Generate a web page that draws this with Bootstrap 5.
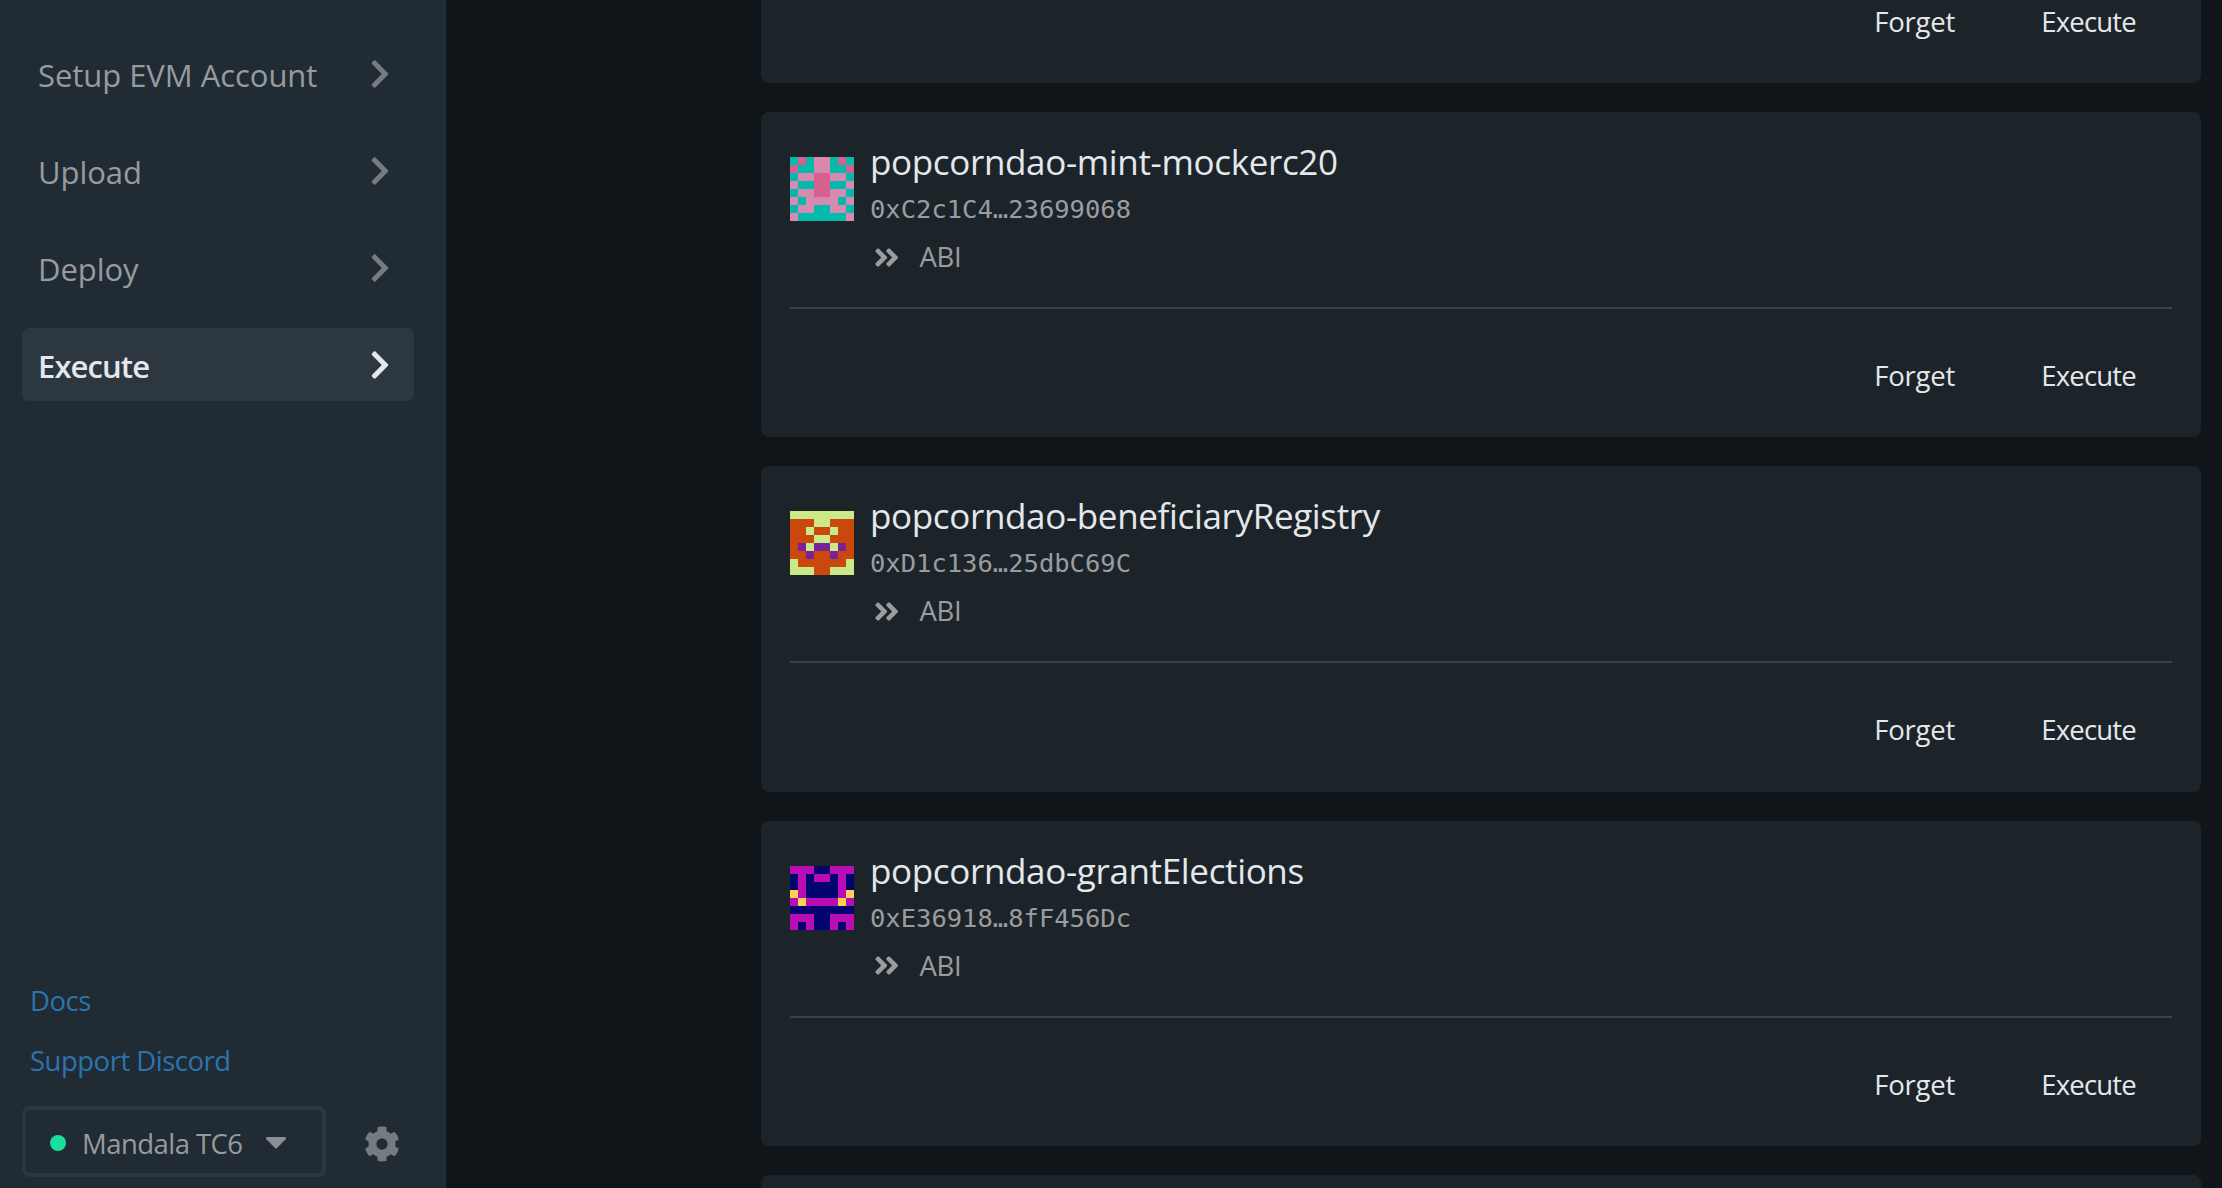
<!DOCTYPE html>
<html lang="en">
<head>
    <meta charset="UTF-8">
    <meta name="viewport" content="width=device-width, initial-scale=1.0">
    <title>Canvas UI - Execute</title>
    <link href="https://cdn.jsdelivr.net/npm/bootstrap@5.3.0/dist/css/bootstrap.min.css" rel="stylesheet">
    <style>
        body {
            background: #101519;
            color: #e3e8ec;
            font-family: "Open Sans", "Noto Sans", sans-serif;
            font-size: 27.5px;
            line-height: 40px;
        }

        /* sidebar */
        .sidebar {
            width: 446px;
            background: #212b33;
            padding: 37px 32px 11px 22px;
        }
        .menu {
            gap: 24px;
        }
        .menu-item {
            height: 73px;
            padding: 0 24.5px 0 16px;
            border-radius: 7px;
            color: #979b9f;
            font-size: 31px;
            text-decoration: none;
        }
        .menu-item span {
            padding-top: 2px;
            letter-spacing: -.05px;
        }
        .menu-item svg {
            width: 20px;
            height: 32px;
            fill: #767b82;
        }
        .menu-item.active {
            background: #2c373f;
            color: #e3e8ee;
            font-weight: 600;
        }
        .menu-item.active span {
            letter-spacing: -.9px;
        }
        .menu-item.active svg {
            fill: #e3e8ee;
        }
        .help-links {
            gap: 20px;
            padding-left: 8px;
            margin-bottom: 25px;
        }
        .help-links a {
            color: #2c74ad;
            text-decoration: none;
            letter-spacing: -.5px;
        }
        .network {
            width: 304px;
            height: 71px;
            padding: 3px 0 0 24px;
            border: 4px solid #2c363f;
            border-radius: 8px;
            color: #979b9f;
            letter-spacing: -.55px;
        }
        .network-name {
            padding-top: 2px;
        }
        .status-dot {
            width: 16px;
            height: 16px;
            margin-right: 16px;
            background: #18e09c;
        }
        .caret {
            width: 20px;
            height: 12px;
            margin-left: 23px;
            fill: #8b8f93;
        }
        .cog {
            width: 36px;
            height: 36px;
            margin: 5px 0 0 38px;
            fill: #767b82;
        }

        /* contract list */
        .contracts {
            padding: 0 21px 0 315px;
            gap: 29px;
        }
        .contract {
            height: 325.4px;
            padding: 26px 29px 0;
            border-radius: 8px;
            background: #1d2429;
        }
        .contract-cut {
            height: 83px;
            padding-top: 0;
            border-radius: 0 0 8px 8px;
        }
        .identicon {
            width: 64px;
            height: 64px;
            margin: 19px 16px 0 0;
        }
        .contract h2 {
            margin: 0 0 3px;
            font-size: 35px;
            font-weight: 400;
            line-height: 48px;
            letter-spacing: -.35px;
        }
        .address {
            color: #9a9d9f;
            font-family: "DejaVu Sans Mono", monospace;
            font-size: 25.5px;
        }
        .abi {
            height: 40px;
            margin-top: 8px;
            padding-left: 4px;
            color: #9a9d9f;
            letter-spacing: -.3px;
        }
        .abi svg {
            width: 25.4px;
            height: 29px;
            margin-right: 20px;
            fill: #9a9d9f;
        }
        .rule {
            height: 2px;
            margin-top: 30px;
            background: #38424a;
        }
        .actions {
            gap: 86px;
            padding: 47px 36px 0 0;
        }
        .contract-cut .actions {
            padding-top: 2px;
        }
        .actions button {
            padding: 0;
            border: 0;
            background: none;
            color: inherit;
            letter-spacing: -.2px;
        }
        .actions button:last-child {
            letter-spacing: -.8px;
        }
    </style>
</head>
<body class="vh-100 overflow-hidden">
    <svg class="d-none">
        <symbol id="chevron" viewBox="0 0 320 512">
            <path d="M285.476 272.971L91.132 467.314c-9.373 9.373-24.569 9.373-33.941 0l-22.667-22.667c-9.357-9.357-9.375-24.522-.04-33.901L188.505 256 34.484 101.255c-9.335-9.379-9.317-24.544.04-33.901l22.667-22.667c9.373-9.373 24.569-9.373 33.941 0L285.475 239.03c9.373 9.372 9.373 24.568.001 33.941z"/>
        </symbol>
        <symbol id="double-right" viewBox="0 0 448 512">
            <path d="M224.3 273l-136 136c-9.4 9.4-24.6 9.4-33.9 0l-22.6-22.6c-9.4-9.4-9.4-24.6 0-33.9l96.4-96.4-96.4-96.4c-9.4-9.4-9.4-24.6 0-33.9L54.3 103c9.4-9.4 24.6-9.4 33.9 0l136 136c9.5 9.4 9.5 24.6.1 34zm192-34l-136-136c-9.4-9.4-24.6-9.4-33.9 0l-22.6 22.6c-9.4 9.4-9.4 24.6 0 33.9l96.4 96.4-96.4 96.4c-9.4 9.4-9.4 24.6 0 33.9l22.6 22.6c9.4 9.4 24.6 9.4 33.9 0l136-136c9.4-9.2 9.4-24.4 0-33.8z"/>
        </symbol>
    </svg>

    <div class="d-flex h-100">
        <aside class="sidebar d-flex flex-column flex-shrink-0">
            <nav class="menu d-flex flex-column">
                <a href="#" class="menu-item d-flex align-items-center justify-content-between"><span>Setup EVM Account</span><svg><use href="#chevron"/></svg></a>
                <a href="#" class="menu-item d-flex align-items-center justify-content-between"><span>Upload</span><svg><use href="#chevron"/></svg></a>
                <a href="#" class="menu-item d-flex align-items-center justify-content-between"><span>Deploy</span><svg><use href="#chevron"/></svg></a>
                <a href="#" class="menu-item active d-flex align-items-center justify-content-between"><span>Execute</span><svg><use href="#chevron"/></svg></a>
            </nav>
            <div class="help-links d-flex flex-column mt-auto">
                <a href="#">Docs</a>
                <a href="#">Support Discord</a>
            </div>
            <div class="d-flex align-items-center">
                <div class="network d-flex align-items-center">
                    <span class="status-dot rounded-circle"></span>
                    <span class="network-name">Mandala TC6</span>
                    <svg class="caret" viewBox="0 0 20 12"><path d="M1.4 0h17.2c1.2 0 1.8 1.4 1 2.3l-8.5 8.7c-.6.6-1.6.6-2.2 0L.4 2.3C-.4 1.4.2 0 1.4 0z"/></svg>
                </div>
                <svg class="cog" viewBox="0 0 512 512"><path d="M487.4 315.7l-42.6-24.6c4.3-23.2 4.3-47 0-70.2l42.6-24.6c4.9-2.8 7.1-8.6 5.5-14-11.1-35.6-30-67.8-54.7-94.6-3.8-4.1-10-5.1-14.8-2.3L380.8 110c-17.9-15.4-38.5-27.3-60.8-35.1V25.8c0-5.6-3.9-10.5-9.4-11.7-36.7-8.2-74.3-7.8-109.2 0-5.5 1.2-9.4 6.1-9.4 11.7V75c-22.2 7.9-42.8 19.8-60.8 35.1L88.7 85.5c-4.9-2.8-11-1.9-14.8 2.3-24.7 26.7-43.6 58.9-54.7 94.6-1.7 5.4.6 11.2 5.5 14L67.3 221c-4.3 23.2-4.3 47 0 70.2l-42.6 24.6c-4.9 2.8-7.1 8.6-5.5 14 11.1 35.6 30 67.8 54.7 94.6 3.8 4.1 10 5.1 14.8 2.3l42.6-24.6c17.9 15.4 38.5 27.3 60.8 35.1v49.2c0 5.6 3.9 10.5 9.4 11.7 36.7 8.2 74.3 7.8 109.2 0 5.5-1.2 9.4-6.1 9.4-11.7v-49.2c22.2-7.9 42.8-19.8 60.8-35.1l42.6 24.6c4.9 2.8 11 1.9 14.8-2.3 24.7-26.7 43.6-58.9 54.7-94.6 1.5-5.5-.7-11.3-5.6-14.1zM256 336c-44.1 0-80-35.9-80-80s35.9-80 80-80 80 35.9 80 80-35.9 80-80 80z"/></svg>
            </div>
        </aside>

        <main class="contracts d-flex flex-column flex-grow-1 overflow-hidden">
            <section class="contract contract-cut flex-shrink-0">
                <div class="actions d-flex justify-content-end"><button type="button">Forget</button><button type="button">Execute</button></div>
            </section>

            <section class="contract flex-shrink-0">
                <div class="d-flex align-items-start">
                    <svg class="identicon" data-colors="#03bbac,#d889af,#d4618f" data-cells="02011020 20011002 01122110 10022001 01122110 10111101 01100110 10000001"></svg>
                    <div>
                        <h2>popcorndao-mint-mockerc20</h2>
                        <div class="address">0xC2c1C4…23699068</div>
                        <div class="abi d-flex align-items-center"><svg><use href="#double-right"/></svg>ABI</div>
                    </div>
                </div>
                <div class="rule"></div>
                <div class="actions d-flex justify-content-end"><button type="button">Forget</button><button type="button">Execute</button></div>
            </section>

            <section class="contract flex-shrink-0">
                <div class="d-flex align-items-start">
                    <svg class="identicon" data-colors="#ca480b,#caea8a,#7a2298" data-cells="11111111 00011000 00100100 00011000 02122120 00200200 10000001 11100111"></svg>
                    <div>
                        <h2>popcorndao-beneficiaryRegistry</h2>
                        <div class="address">0xD1c136…25dbC69C</div>
                        <div class="abi d-flex align-items-center"><svg><use href="#double-right"/></svg>ABI</div>
                    </div>
                </div>
                <div class="rule"></div>
                <div class="actions d-flex justify-content-end"><button type="button">Forget</button><button type="button">Execute</button></div>
            </section>

            <section class="contract flex-shrink-0">
                <div class="d-flex align-items-start">
                    <svg class="identicon" data-colors="#03036f,#b90cb5,#fdd252" data-cells="11100111 01011010 01000010 21000012 12111121 00000000 11100111 10100101"></svg>
                    <div>
                        <h2>popcorndao-grantElections</h2>
                        <div class="address">0xE36918…8fF456Dc</div>
                        <div class="abi d-flex align-items-center"><svg><use href="#double-right"/></svg>ABI</div>
                    </div>
                </div>
                <div class="rule"></div>
                <div class="actions d-flex justify-content-end"><button type="button">Forget</button><button type="button">Execute</button></div>
            </section>

            <section class="contract flex-shrink-0"></section>
        </main>
    </div>

    <script src="https://cdn.jsdelivr.net/npm/bootstrap@5.3.0/dist/js/bootstrap.bundle.min.js"></script>
    <script>
        // paint the 8x8 address identicons
        document.querySelectorAll('.identicon').forEach(function(icon) {
            const colors = icon.dataset.colors.split(',');
            let rects = '';
            icon.dataset.cells.split(' ').forEach(function(row, y) {
                row.split('').forEach(function(cell, x) {
                    rects += `<rect x="${x}" y="${y}" width="1" height="1" fill="${colors[cell]}"/>`;
                });
            });
            icon.setAttribute('viewBox', '0 0 8 8');
            icon.setAttribute('shape-rendering', 'crispEdges');
            icon.innerHTML = rects;
        });
    </script>
</body>
</html>
